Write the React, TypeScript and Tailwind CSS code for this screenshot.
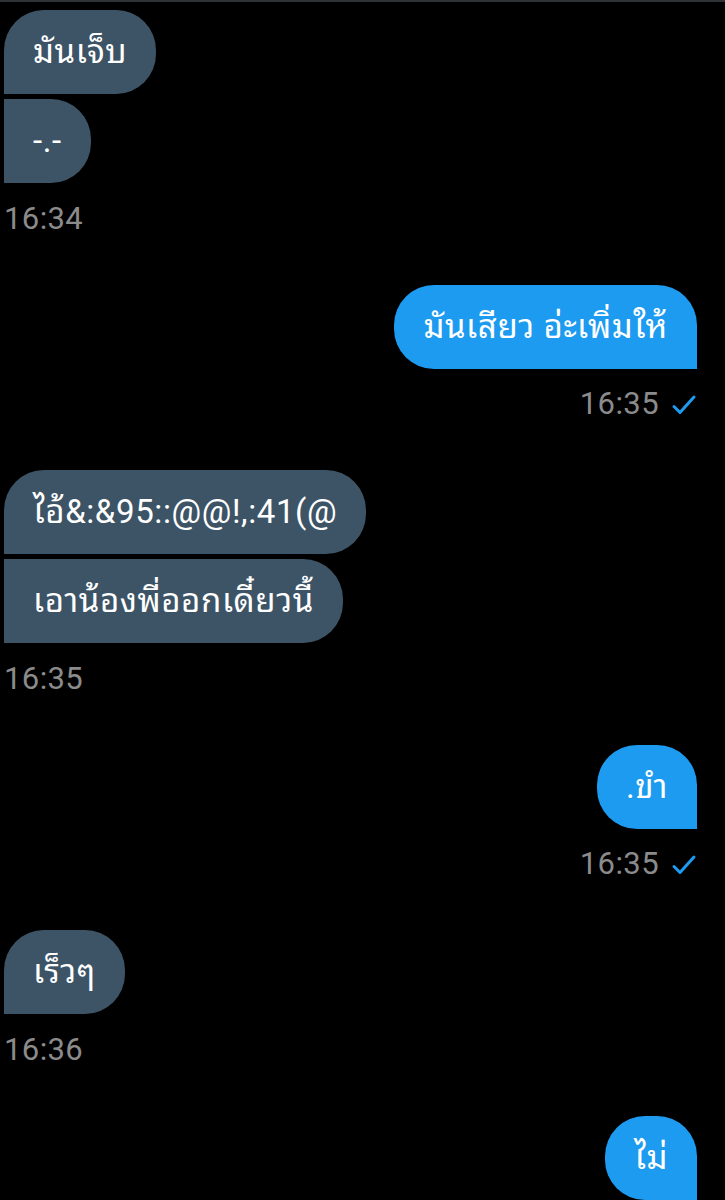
import React from "react";

type Msg = { text: string };
type Group = { side: "in" | "out"; time: string; msgs: Msg[] };

const groups: Group[] = [
  { side: "in", time: "16:34", msgs: [{ text: "มันเจ็บ" }, { text: "-.-" }] },
  { side: "out", time: "16:35", msgs: [{ text: "มันเสียว อ่ะเพิ่มให้" }] },
  {
    side: "in",
    time: "16:35",
    msgs: [{ text: "ไอ้&:&95::@@!,:41(@" }, { text: "เอาน้องพี่ออกเดี๋ยวนี้" }],
  },
  { side: "out", time: "16:35", msgs: [{ text: ".ขำ" }] },
  { side: "in", time: "16:36", msgs: [{ text: "เร็วๆ" }] },
  { side: "out", time: "", msgs: [{ text: "ไม่" }] },
];

function Check() {
  return (
    <svg width="26" height="22" viewBox="0 0 26 22" fill="none" className="ml-3">
      <path
        d="M3 12.5 L9 18.5 L23 3"
        stroke="#1d9bf0"
        strokeWidth="3"
        strokeLinecap="round"
        strokeLinejoin="round"
      />
    </svg>
  );
}

function bubbleShape(side: "in" | "out", first: boolean) {
  if (side === "out") return "rounded-[40px] rounded-br-none bg-[#1d9bf0]";
  if (first) return "rounded-[40px] rounded-bl-none bg-[#3d5466]";
  return "rounded-r-[40px] bg-[#3d5466]";
}

function Bubble({ text, side, first }: { text: string; side: "in" | "out"; first: boolean }) {
  return (
    <div
      className={
        "h-[84px] flex items-center px-[29px] text-white text-[33px] leading-[40px] tracking-[0.6px] whitespace-nowrap " +
        bubbleShape(side, first)
      }
    >
      {text}
    </div>
  );
}

export default function App() {
  return (
    <div
      className="min-h-[1200px] w-[725px] bg-black border-t-2 border-[#2f3336] overflow-hidden"
      style={{ fontFamily: 'Roboto, "Noto Sans Thai Looped", "Noto Sans Thai", "Noto Sans", sans-serif' }}
    >
      <div className="flex flex-col pt-2 pl-1 pr-7">
        {groups.map((g, gi) => (
          <div
            key={gi}
            className={"flex flex-col mb-[47.5px] " + (g.side === "in" ? "items-start" : "items-end")}
          >
            <div className={"flex flex-col gap-[5px] " + (g.side === "in" ? "items-start" : "items-end")}>
              {g.msgs.map((m, i) => (
                <Bubble key={i} text={m.text} side={g.side} first={i === 0} />
              ))}
            </div>
            {g.time && (
              <div className="mt-[18px] flex items-center h-9 text-[31px] text-[#8b8b8b] tracking-[0.4px]">
                <span>{g.time}</span>
                {g.side === "out" && <Check />}
              </div>
            )}
          </div>
        ))}
      </div>
    </div>
  );
}
